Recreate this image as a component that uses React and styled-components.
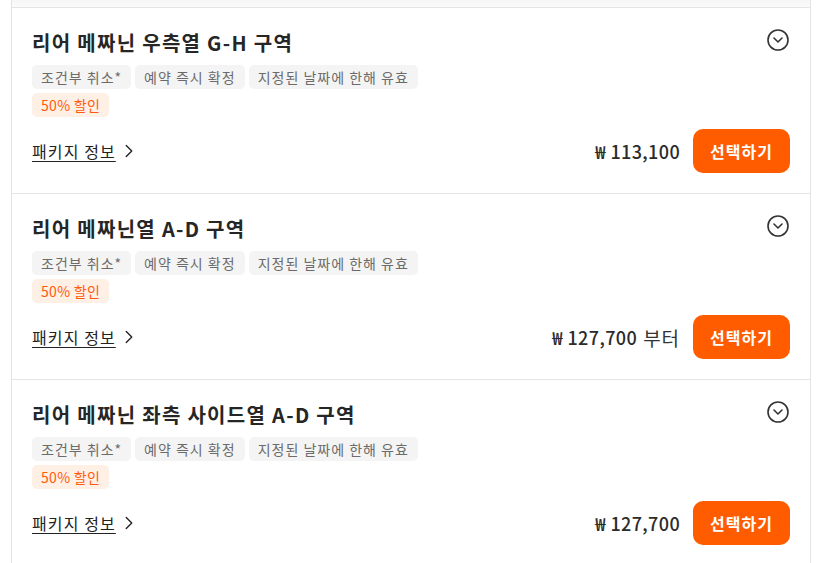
import React from "react";
import styled, { createGlobalStyle } from "styled-components";
import { CircleChevronDown, ChevronRight } from "lucide-react";

const GlobalStyle = createGlobalStyle`
  body {
    margin: 0;
    background: #fff;
    font-family: "Noto Sans CJK KR", "Noto Sans", sans-serif;
    color: #222;
  }
`;

const packages = [
  { id: 1, title: "리어 메짜닌 우측열 G-H 구역", price: "113,100", from: false },
  { id: 2, title: "리어 메짜닌열 A-D 구역", price: "127,700", from: true },
  { id: 3, title: "리어 메짜닌 좌측 사이드열 A-D 구역", price: "127,700", from: false },
];

const tags = ["조건부 취소*", "예약 즉시 확정", "지정된 날짜에 한해 유효"];

function PackageItem({ item }) {
  return (
    <Item>
      <Header>
        <Title>{item.title}</Title>
        <ToggleBtn aria-label="펼치기">
          <CircleChevronDown size={24} strokeWidth={1.6} />
        </ToggleBtn>
      </Header>
      <TagStack>
        <TagRow>
          {tags.map((t) => (
            <Tag key={t}>{t}</Tag>
          ))}
        </TagRow>
        <TagRow>
          <Tag $sale>50% 할인</Tag>
        </TagRow>
      </TagStack>
      <Footer>
        <InfoLink href="#">
          <span>패키지 정보</span>
          <ChevronRight size={22} strokeWidth={1.5} />
        </InfoLink>
        <PriceBox>
          <Price>₩ {item.price}</Price>
          {item.from && <From>부터</From>}
          <SelectBtn>선택하기</SelectBtn>
        </PriceBox>
      </Footer>
    </Item>
  );
}

export default function App() {
  return (
    <>
      <GlobalStyle />
      <List>
        <PrevTail />
        {packages.map((p) => (
          <PackageItem key={p.id} item={p} />
        ))}
      </List>
    </>
  );
}

const List = styled.div`
  width: 800px;
  box-sizing: border-box;
  margin-left: 11px;
  border-left: 1px solid #e3e3e3;
  border-right: 1px solid #e3e3e3;
`;

const PrevTail = styled.div`
  height: 7px;
  background: linear-gradient(#f6f6f6, #fbfbfb);
`;

const Item = styled.section`
  border-top: 1px solid #e5e5e5;
  padding: 20px;
`;

const Header = styled.div`
  display: flex;
  justify-content: space-between;
  align-items: flex-start;
  margin-bottom: 7px;
`;

const Title = styled.h3`
  margin: 0;
  font-size: 20px;
  line-height: 30px;
  font-weight: 700;
  letter-spacing: 1.3px;
  color: #262626;
`;

const ToggleBtn = styled.button`
  border: 0;
  padding: 0;
  background: none;
  color: #333;
  display: flex;
  cursor: pointer;
`;

const TagStack = styled.div`
  display: flex;
  flex-direction: column;
  gap: 4px;
`;

const TagRow = styled.div`
  display: flex;
  flex-wrap: wrap;
  gap: 4px;
`;

const Tag = styled.span`
  height: 24px;
  line-height: 24px;
  padding: 0 9px;
  border-radius: 5px;
  font-size: 14px;
  letter-spacing: ${({ $sale }) => ($sale ? "0.3px" : "1px")};
  background: ${({ $sale }) => ($sale ? "#fff0e6" : "#f4f4f4")};
  color: ${({ $sale }) => ($sale ? "#ff5a0a" : "#6b6b6b")};
`;

const Footer = styled.div`
  display: flex;
  justify-content: space-between;
  align-items: center;
  margin-top: 12px;
`;

const InfoLink = styled.a`
  display: flex;
  align-items: center;
  gap: 2px;
  color: #222;
  font-size: 16px;
  letter-spacing: 1.1px;
  text-decoration: none;

  span {
    text-decoration: underline;
    text-underline-offset: 3px;
  }
`;

const PriceBox = styled.div`
  display: flex;
  align-items: center;
`;

const Price = styled.span`
  font-size: 18px;
  font-weight: 500;
  letter-spacing: 0.4px;
  color: #2b2b2b;
`;

const From = styled.span`
  font-size: 19px;
  letter-spacing: 1px;
  color: #333;
  margin-left: 6px;
`;

const SelectBtn = styled.button`
  margin-left: 13px;
  height: 44px;
  padding: 0 17px;
  border: 0;
  border-radius: 10px;
  background: #ff5c00;
  color: #fff;
  font-family: inherit;
  font-size: 16px;
  font-weight: 700;
  letter-spacing: 1px;
  cursor: pointer;
`;
